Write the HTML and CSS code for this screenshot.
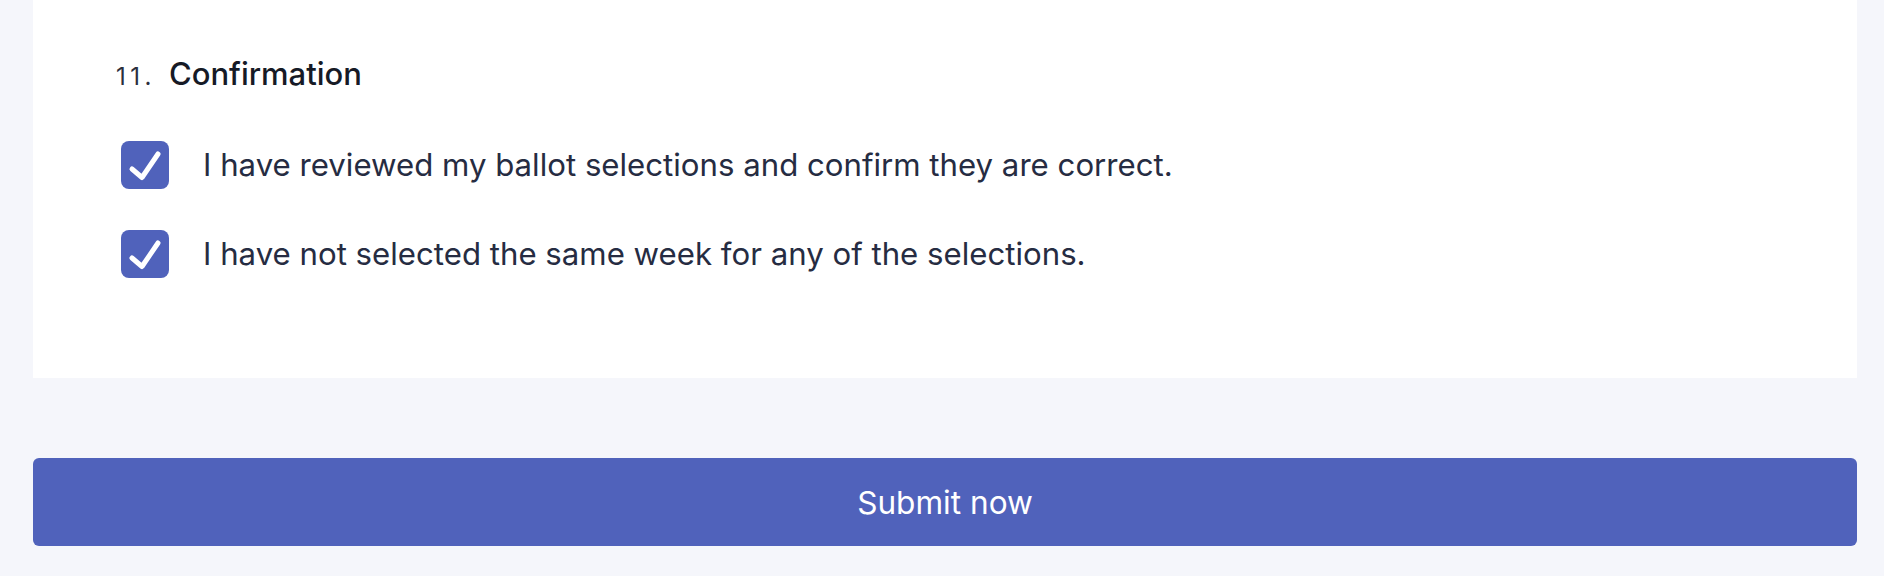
FILE: index.html
```html
<!DOCTYPE html>
<html lang="en">
<head>
  <meta charset="UTF-8" />
  <meta name="viewport" content="width=device-width, initial-scale=1.0"/>
  <title>Ballot - Confirmation</title>
  <link rel="stylesheet" href="styles.css">
</head>
<body>

  <section class="card">
    <h2 class="question">
      <span class="question-num">11.</span>
      <span class="question-title">Confirmation</span>
    </h2>

    <label class="check-row">
      <span class="check-box">
        <svg viewBox="0 0 48 48" width="48" height="48"><path d="M11 28 L21 36.5 L37 13" /></svg>
      </span>
      <span class="check-label">I have reviewed my ballot selections and confirm they are correct.</span>
    </label>

    <label class="check-row">
      <span class="check-box">
        <svg viewBox="0 0 48 48" width="48" height="48"><path d="M11 28 L21 36.5 L37 13" /></svg>
      </span>
      <span class="check-label">I have not selected the same week for any of the selections.</span>
    </label>
  </section>

  <button class="submit-btn" type="button">Submit now</button>

</body>
</html>
```

FILE: styles.css
```css
body, html {
  margin: 0;
  padding: 0;
  background: #f5f6fb;
  font-family: Inter, "Noto Sans", sans-serif;
}

body {
  padding: 0 27px 0 33px;
}

.card {
  background: white;
  padding: 55px 0 100px 83px;
  display: flex;
  flex-direction: column;
  gap: 41px;
}

.question {
  margin: 0 0 5px 0;
  display: flex;
  align-items: baseline;
  gap: 13px;
  line-height: 37px;
}

.question-num {
  font-size: 24px;
  font-weight: 400;
  color: #2b2f3d;
  letter-spacing: 4.5px;
}

.question-title {
  font-size: 31px;
  font-weight: 500;
  color: #161a26;
}

.check-row {
  display: flex;
  align-items: center;
  gap: 34px;
  margin-left: 5px;
}

.check-box {
  width: 48px;
  height: 48px;
  border-radius: 8px;
  background: #5062bb;
  display: flex;
}

.check-box path {
  fill: none;
  stroke: white;
  stroke-width: 5;
  stroke-linecap: round;
  stroke-linejoin: round;
}

.check-label {
  font-size: 31.2px;
  color: #262c42;
}

.submit-btn {
  display: block;
  width: 100%;
  margin-top: 80px;
  height: 88px;
  border: none;
  border-radius: 6px;
  background: #5062bb;
  color: white;
  font-family: Inter, "Noto Sans", sans-serif;
  font-size: 31.6px;
  cursor: pointer;
}
```
